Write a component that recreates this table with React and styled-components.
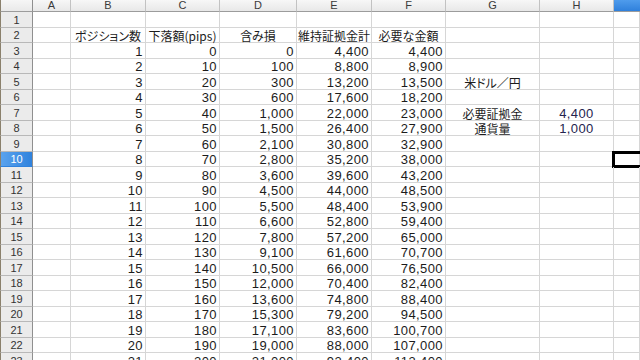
import React from "react";
import styled, { createGlobalStyle, css } from "styled-components";

const Global = createGlobalStyle`
  html, body { margin: 0; padding: 0; background: #ffffff; overflow: hidden; }
  body { font-family: "Liberation Sans", "Noto Sans CJK JP", sans-serif; }
`;

const COLS = ["A", "B", "C", "D", "E", "F", "G", "H", "I"];
const WIDTHS = [33, 38, 75, 74, 77, 75, 74, 94, 74, 26];

const Sheet = styled.div`
  display: grid;
  grid-template-columns: ${WIDTHS.map((w) => w + "px").join(" ")};
  grid-template-rows: 12px;
  grid-auto-rows: 15.5px;
  width: 640px;
  height: 360px;
  overflow: hidden;
`;

const Corner = styled.div`
  box-sizing: border-box;
  background: linear-gradient(#f6f6f6, #e9e9e9);
  border-right: 1px solid #8f8f8f;
  border-bottom: 1px solid #9c9c9c;
  border-left: 1px solid #8a806c;
`;

const ColHead = styled.div`
  box-sizing: border-box;
  display: flex;
  justify-content: center;
  align-items: flex-start;
  font-size: 11px;
  line-height: 10px;
  color: #3a3a3a;
  overflow: hidden;
  border-right: 1px solid #c2c2c2;
  border-bottom: 1px solid #9c9c9c;
  background: linear-gradient(#f7f7f7, #e8e8e8);
  ${(p) =>
    p.$selected &&
    css`
      background: linear-gradient(#4f9cec, #2f80dc);
      color: #ffffff;
      border-right: none;
    `}
`;

const RowHead = styled.div`
  box-sizing: border-box;
  display: flex;
  justify-content: center;
  align-items: center;
  padding-top: 1px;
  font-size: 11px;
  color: #333333;
  background: #ebebeb;
  border-left: 1px solid #8a806c;
  border-right: 1px solid #8f8f8f;
  border-bottom: 1px solid #b8b8b8;
  ${(p) =>
    p.$selected &&
    css`
      background: linear-gradient(90deg, #5aa3ee, #2f82dd);
      color: #ffffff;
      border-bottom-color: #2f82dd;
    `}
`;

const Cell = styled.div`
  box-sizing: border-box;
  position: relative;
  display: flex;
  align-items: flex-end;
  justify-content: ${(p) => (p.$align === "center" ? "center" : p.$align === "left" ? "flex-start" : "flex-end")};
  padding: 0 2px;
  border-right: 1px solid #d6d6d6;
  border-bottom: 1px solid #d6d6d6;
  font-size: 13px;
  letter-spacing: 0.4px;
  line-height: 13px;
  color: ${(p) => (p.$tone === "navy" ? "#24244e" : "#1c1c1c")};
  white-space: nowrap;
  ${(p) =>
    p.$active &&
    css`
      &::after {
        content: "";
        position: absolute;
        left: -2px;
        top: -1px;
        right: -6px;
        bottom: -2px;
        border: 3px solid #000000;
      }
    `}
`;

const Label = styled.span`
  font-family: "Noto Sans CJK JP", "Liberation Sans", sans-serif;
  font-size: 12px;
  letter-spacing: 0;
  line-height: 14px;
  font-feature-settings: "palt";
  color: #1c1c1c;
  position: relative;
  top: 1px;
`;

const fmt = (n) => n.toLocaleString("en-US");

const headerRow = {
  B: "ポジション数",
  C: "下落額(pips)",
  D: "含み損",
  E: "維持証拠金計",
  F: "必要な金額",
};

const extras = {
  5: { G: "米ドル／円" },
  7: { G: "必要証拠金", H: 4400 },
  8: { G: "通貨量", H: 1000 },
};

function buildRow(r) {
  const cells = {};
  if (r === 2) {
    Object.entries(headerRow).forEach(([k, v]) => (cells[k] = { text: v, jp: true, align: "center" }));
  }
  if (r >= 3) {
    const n = r - 2;
    const d = (100 * n * (n - 1)) / 2;
    const e = 4400 * n;
    cells.B = { text: fmt(n) };
    cells.C = { text: fmt((n - 1) * 10) };
    cells.D = { text: fmt(d) };
    cells.E = { text: fmt(e) };
    cells.F = { text: fmt(d + e) };
  }
  if (extras[r]) {
    const ex = extras[r];
    if (ex.G) cells.G = { text: ex.G, jp: true, align: "center" };
    if (ex.H) cells.H = { text: fmt(ex.H), align: "center", tone: "navy" };
  }
  return cells;
}

export default function App() {
  const rows = Array.from({ length: 23 }, (_, i) => i + 1);
  return (
    <>
      <Global />
      <Sheet>
        <Corner />
        {COLS.map((c) => (
          <ColHead key={c} $selected={c === "I"}>
            {c === "I" ? null : c}
          </ColHead>
        ))}
        {rows.map((r) => {
          const cells = buildRow(r);
          return (
            <React.Fragment key={r}>
              <RowHead $selected={r === 10}>{r}</RowHead>
              {COLS.map((c) => {
                const cell = cells[c];
                return (
                  <Cell
                    key={c}
                    $align={cell?.align || "right"}
                    $tone={cell?.tone}
                    $active={r === 10 && c === "I"}
                  >
                    {cell ? (cell.jp ? <Label>{cell.text}</Label> : cell.text) : null}
                  </Cell>
                );
              })}
            </React.Fragment>
          );
        })}
      </Sheet>
    </>
  );
}
